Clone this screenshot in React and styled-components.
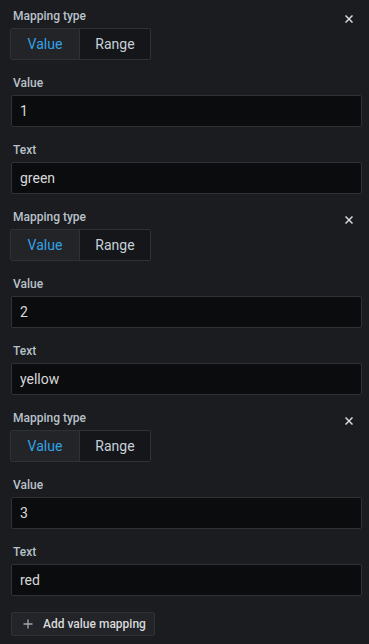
import React from 'react';
import styled, { createGlobalStyle } from 'styled-components';

const GlobalStyle = createGlobalStyle`
  html, body {
    margin: 0;
    padding: 0;
    background: #1a1c20;
  }
  body {
    font-family: Roboto, "Liberation Sans", sans-serif;
    color: #c7d0d9;
  }
`;

const mappings = [
  { value: '1', text: 'green' },
  { value: '2', text: 'yellow' },
  { value: '3', text: 'red' },
];

const App = () => {
  return (
    <>
      <GlobalStyle />
      <Pane>
        {mappings.map((m) => (
          <Mapping key={m.value}>
            <Field>
              <HeaderRow>
                <Label>Mapping type</Label>
                <CloseButton aria-label="remove">
                  <svg width="8" height="8" viewBox="0 0 8 8">
                    <path d="M0.5 0.5 L7.5 7.5 M7.5 0.5 L0.5 7.5" stroke="#d8d9da" strokeWidth="1.5" />
                  </svg>
                </CloseButton>
              </HeaderRow>
              <RadioGroup>
                <RadioButton active>Value</RadioButton>
                <RadioButton>Range</RadioButton>
              </RadioGroup>
            </Field>
            <Field>
              <Label>Value</Label>
              <Input defaultValue={m.value} />
            </Field>
            <Field>
              <Label>Text</Label>
              <Input defaultValue={m.text} />
            </Field>
          </Mapping>
        ))}
        <AddButton>
          <svg width="10" height="10" viewBox="0 0 10 10">
            <path d="M5 0.5 V9.5 M0.5 5 H9.5" stroke="#9fa7b3" strokeWidth="1.3" />
          </svg>
          Add value mapping
        </AddButton>
      </Pane>
    </>
  );
};

const Pane = styled.div`
  width: 369px;
  height: 644px;
  box-sizing: border-box;
  padding: 8px 7px 0 10px;
  display: flex;
  flex-direction: column;
  gap: 15px;
`;

const Mapping = styled.div`
  display: flex;
  flex-direction: column;
  gap: 15px;
`;

const Field = styled.div`
  display: flex;
  flex-direction: column;
`;

const HeaderRow = styled.div`
  display: flex;
  justify-content: space-between;
  align-items: flex-start;
`;

const Label = styled.label`
  font-size: 12px;
  line-height: 16px;
  font-weight: 500;
  color: #b9c1ca;
  margin: 0 0 4px 3px;
`;

const CloseButton = styled.button`
  width: 16px;
  height: 16px;
  padding: 0;
  margin: 3px 5px 0 0;
  border: none;
  background: transparent;
  display: flex;
  align-items: center;
  justify-content: center;
`;

const RadioGroup = styled.div`
  display: flex;
  width: 141px;
  height: 32px;
  box-sizing: border-box;
  border: 1px solid #2c3235;
  border-radius: 2px;
  background: #141619;
  overflow: hidden;
`;

const RadioButton = styled.div`
  flex: 0 0 ${(p) => (p.active ? '68px' : 'auto')};
  flex-grow: ${(p) => (p.active ? 0 : 1)};
  display: flex;
  align-items: center;
  justify-content: center;
  font-size: 14px;
  color: ${(p) => (p.active ? '#33a2e5' : '#c7d0d9')};
  background: ${(p) => (p.active ? '#222428' : 'transparent')};
  border-right: ${(p) => (p.active ? '1px solid #2c3235' : 'none')};
`;

const Input = styled.input`
  height: 32px;
  box-sizing: border-box;
  margin-left: 1px;
  padding: 0 8px;
  border: 1px solid #2c3235;
  border-radius: 2px;
  background: #0b0c0e;
  color: #d8d9da;
  font-family: Roboto, "Liberation Sans", sans-serif;
  font-size: 14px;
  outline: none;
`;

const AddButton = styled.button`
  align-self: flex-start;
  margin: 1px 0 0 1px;
  height: 24px;
  box-sizing: border-box;
  padding: 0 8px 0 11px;
  display: flex;
  align-items: center;
  gap: 10px;
  white-space: nowrap;
  border: 1px solid #2c3235;
  border-radius: 2px;
  background: #222428;
  color: #d8d9da;
  font-family: Roboto, "Liberation Sans", sans-serif;
  font-size: 12px;
  font-weight: 500;
`;

export default App;
